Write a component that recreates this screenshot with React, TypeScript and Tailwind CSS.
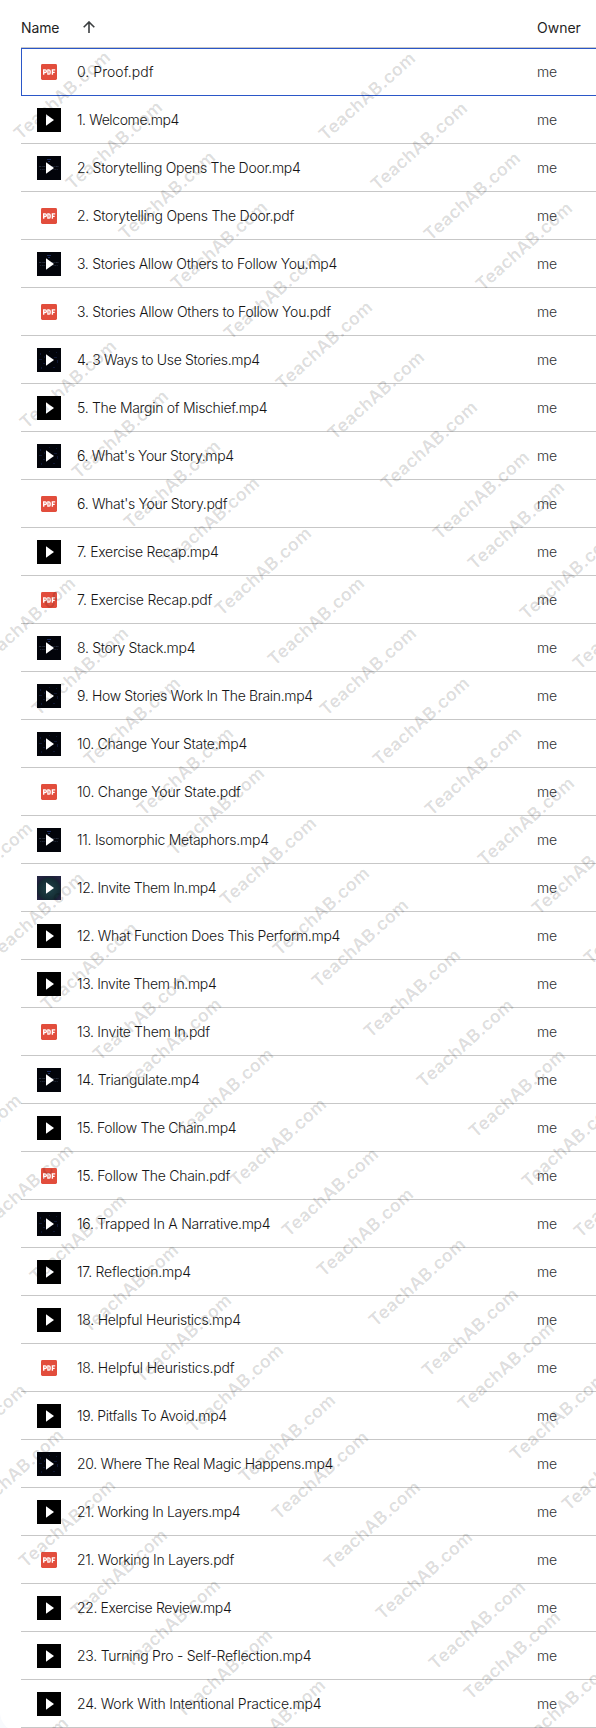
type Thumb = "pdf" | "black" | "title" | "stars" | "teal";

// name, thumbnail, natural text width, desired text width
type FileRow = [string, Thumb, number, number];

const files: FileRow[] = [
  ["0. Proof.pdf", "pdf", 76, 76.5],
  ["1. Welcome.mp4", "black", 107.5, 102],
  ["2. Storytelling Opens The Door.mp4", "title", 233.5, 223.5],
  ["2. Storytelling Opens The Door.pdf", "pdf", 225.7, 217],
  ["3. Stories Allow Others to Follow You.mp4", "title", 272.1, 260],
  ["3. Stories Allow Others to Follow You.pdf", "pdf", 264.3, 253.7],
  ["4. 3 Ways to Use Stories.mp4", "stars", 192.1, 182.7],
  ["5. The Margin of Mischief.mp4", "black", 199, 190.2],
  ["6. What's Your Story.mp4", "stars", 165.5, 156.7],
  ["6. What's Your Story.pdf", "pdf", 157.8, 150.2],
  ["7. Exercise Recap.mp4", "black", 147, 141.5],
  ["7. Exercise Recap.pdf", "pdf", 139.2, 135.2],
  ["8. Story Stack.mp4", "title", 123.8, 118.2],
  ["9. How Stories Work In The Brain.mp4", "stars", 248, 235.7],
  ["10. Change Your State.mp4", "stars", 176.7, 170],
  ["10. Change Your State.pdf", "pdf", 168.9, 163.7],
  ["11. Isomorphic Metaphors.mp4", "title", 198.8, 191.7],
  ["12. Invite Them In.mp4", "teal", 147.6, 139.3],
  ["12. What Function Does This Perform.mp4", "black", 274.4, 263],
  ["13. Invite Them In.mp4", "black", 147.1, 139.3],
  ["13. Invite Them In.pdf", "pdf", 139.4, 132.8],
  ["14. Triangulate.mp4", "title", 127.4, 122.5],
  ["15. Follow The Chain.mp4", "black", 167.5, 159.2],
  ["15. Follow The Chain.pdf", "pdf", 159.7, 153],
  ["16. Trapped In A Narrative.mp4", "stars", 201.4, 193.3],
  ["17. Reflection.mp4", "black", 117.7, 113.7],
  ["18. Helpful Heuristics.mp4", "black", 170.4, 163.8],
  ["18. Helpful Heuristics.pdf", "pdf", 162.6, 157.3],
  ["19. Pitfalls To Avoid.mp4", "black", 156.8, 149.8],
  ["20. Where The Real Magic Happens.mp4", "stars", 268.2, 256],
  ["21. Working In Layers.mp4", "black", 172.1, 163.2],
  ["21. Working In Layers.pdf", "pdf", 164.3, 157],
  ["22. Exercise Review.mp4", "black", 163, 154.3],
  ["23. Turning Pro - Self-Reflection.mp4", "black", 243.4, 234.3],
  ["24. Work With Intentional Practice.mp4", "black", 252.7, 244.3],
];

// Diagonal runs of watermarks: centre of the first one and how many follow.
const runs: [number, number, number][] = [
  [62, 93, 9],
  [367, 94.5, 4],
  [516, 523, 3],
  [67.5, 382, 3],
  [211, 519, 2],
  [316, 619, 5],
  [27.4, 619, 4],
  [216, 809, 3],
  [579.5, 868, 2],
  [360, 941, 6],
  [-16, 864, 4],
  [173, 1040, 4],
  [365, 1230, 3],
  [505.5, 1364, 3],
  [-27, 1136, 7],
  [319.5, 1473, 4],
  [512, 1653, 2],
  [-22, 1426, 1],
  [14.6, 1471, 6],
  [20, 1759, 1],
  [326, 1769, 1],
];

const marks = runs.flatMap(([x, y, n]) =>
  Array.from({ length: n }, (_, k) => ({ x: x + 52.4 * k, y: y + 1.5 + 50.1 * k })),
);

function PdfIcon() {
  return (
    <svg className="h-4 w-4" viewBox="0 0 16 16">
      <rect width="16" height="16" rx="1.4" fill="#e24d3c" />
      <g fill="none" stroke="#fff" strokeWidth="1.35">
        <path d="M2.7 10.7V5.9h1.4a1.25 1.25 0 0 1 0 2.6H2.7" />
        <path d="M6.9 5.9v4.2h.9c.9 0 1.3-.5 1.3-1.2V7.1c0-.8-.4-1.2-1.3-1.2z" />
        <path d="M11.4 10.7V5.9h2.8M11.4 8.3h2.3" />
      </g>
    </svg>
  );
}

function VideoThumb({ kind }: { kind: Thumb }) {
  return (
    <svg className="h-6 w-6" viewBox="0 0 24 24">
      <defs>
        <radialGradient id="teal-glow" cx="50%" cy="55%" r="62%">
          <stop offset="0" stopColor="#1f4448" />
          <stop offset="0.72" stopColor="#142b33" />
          <stop offset="0.82" stopColor="#1d2038" />
          <stop offset="1" stopColor="#232542" />
        </radialGradient>
      </defs>
      <rect
        width="24"
        height="24"
        fill={kind === "teal" ? "url(#teal-glow)" : kind === "black" ? "#000" : "#02040a"}
      />
      {kind === "title" && (
        <g fill="none" stroke="#262d3b" strokeWidth="1">
          <path d="M10 3.5h4M11 5.5h2" stroke="#1c2b5c" />
          <path d="M2 10.5h20" strokeDasharray="2 .7 1 .5" />
          <path d="M3 13.5h18" stroke="#1c2331" strokeDasharray="1 .7 2 .5" />
        </g>
      )}
      {kind === "stars" && (
        <g fill="#0f1733">
          <path d="M3 5h1v2H3zM6 15h2v1H6zM19 4h1v1h-1zM20 12h1v3h-1zM4 19h1v2H4zM16 19h2v1h-2zM2 11h3v1H2zM17 9h3v1h-3zM12 3h1v1h-1zM7 8h1v2H7z" />
        </g>
      )}
      <path d="M9 6.2v11.6L17 12z" fill="#fff" />
    </svg>
  );
}

export default function App() {
  return (
    <div className="relative h-[1728px] w-[596px] overflow-hidden bg-white font-['Inter',sans-serif] text-[14px]">
      <div className="absolute bottom-0 left-0 h-7 w-4 bg-[#f8fafd]">
        <div className="h-8 w-8 rounded-bl-[20px] bg-white" />
      </div>

      <div className="relative flex h-full flex-col pl-[21px]">
        <header className="flex h-12 shrink-0 items-center border-b border-[#c7c7c7] pt-[7px] text-[#1f1f1f]">
          <div className="flex w-[516px] items-center">
            <span className="w-[62px] tracking-[-0.1px]">Name</span>
            <svg className="h-3 w-3" viewBox="0 0 12 12" fill="none" stroke="#3c3f41" strokeWidth="1.6">
              <path d="M6 12V1.2M.7 6.3 6 1l5.3 5.3" />
            </svg>
          </div>
          <span>Owner</span>
        </header>

        {files.map(([name, kind, natural, wanted], i) => (
          <div
            key={name}
            className={
              i === 0
                ? "-mr-1 flex h-12 shrink-0 items-center border border-[#2b57c8] pl-[15px]"
                : "flex h-12 shrink-0 items-center border-b border-[#c7c7c7] pt-px pl-4"
            }
          >
            <div className="flex w-6 justify-center">
              {kind === "pdf" ? <PdfIcon /> : <VideoThumb kind={kind} />}
            </div>
            <span
              className="ml-4 w-[460px] pb-[2px] font-light whitespace-nowrap text-[#141414]"
              style={{ letterSpacing: `${(wanted - natural) / name.length}px` }}
            >
              {name}
            </span>
            <span className="pb-[2px] font-light tracking-[-0.2px] text-[#303234]">me</span>
          </div>
        ))}
      </div>

      <div className="pointer-events-none absolute inset-0 overflow-hidden" aria-hidden="true">
        {marks.map((m) => (
          <span
            key={`${m.x}-${m.y}`}
            className="absolute -translate-x-1/2 -translate-y-1/2 -rotate-[41.8deg] text-[17.5px] leading-none font-semibold tracking-[0.4px] whitespace-nowrap text-black/14"
            style={{ left: m.x, top: m.y }}
          >
            TeachAB.com
          </span>
        ))}
      </div>
    </div>
  );
}
